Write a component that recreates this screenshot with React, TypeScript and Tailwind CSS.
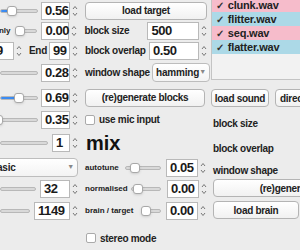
import React from 'react';

const font = { fontFamily: '"Liberation Sans", Arial, sans-serif' };

function Arrows () {
  return (
    <svg width="6" height="14" viewBox="0 0 6 14" className="shrink-0">
      <path d="M1 5 L3 2.5 L5 5" fill="none" stroke="#777" strokeWidth="1" />
      <path d="M1 9 L3 11.5 L5 9" fill="none" stroke="#777" strokeWidth="1" />
    </svg>
  );
}

function Spin ({ value, w }: { value: string; w: string }) {
  return (
    <div className={`flex h-[18px] shrink-0 items-center gap-[2px] ${w}`}>
      <div className="flex h-full min-w-0 flex-1 items-center whitespace-nowrap border border-[#b9b9b9] bg-white pl-[3px] text-[13px] font-bold tracking-[-0.4px] text-[#1a1a1a]">
        {value}
      </div>
      <Arrows />
    </div>
  );
}

function Slider ({ w, fill, handle }: { w: string; fill?: number; handle: number }) {
  return (
    <div className={`relative flex h-[18px] shrink-0 items-center ${w}`}>
      <div className="relative h-[4px] w-full overflow-hidden rounded-full border border-[#b8b8b8] bg-[#d9d9d9]">
        {fill ? <div className="h-full bg-[#3c8cf2]" style={{ width: fill }} /> : null}
      </div>
      <div
        className="absolute top-[4px] h-[10px] w-[10px] rounded-[3px] border border-[#a8a8a8] bg-white shadow-sm"
        style={{ left: handle }}
      />
    </div>
  );
}

function Button ({ label, w, className = '' }: { label: string; w: string; className?: string }) {
  return (
    <div
      className={`flex h-[18px] shrink-0 items-center justify-center whitespace-nowrap rounded-[4px] border border-[#b4b4b4] bg-gradient-to-b from-white to-[#f1f1f1] text-[10px] font-bold tracking-[-0.3px] text-[#222] ${w} ${className}`}
    >
      {label}
    </div>
  );
}

function Label ({ text, className = '' }: { text: string; className?: string }) {
  return (
    <span className={`shrink-0 whitespace-nowrap text-[10px] font-bold tracking-[-0.3px] text-[#222] ${className}`}>
      {text}
    </span>
  );
}

function Small ({ text, className = '' }: { text: string; className?: string }) {
  return (
    <span className={`shrink-0 whitespace-nowrap text-[8px] font-bold text-[#222] ${className}`}>
      {text}
    </span>
  );
}

function Check ({ label }: { label: string }) {
  return (
    <div className="flex items-center gap-[4px]">
      <div className="h-[10px] w-[10px] rounded-[2px] border border-[#aaa] bg-white" />
      <Label text={label} />
    </div>
  );
}

function Dropdown ({ value, w }: { value: string; w: string }) {
  return (
    <div
      className={`flex h-[19px] shrink-0 items-center justify-between whitespace-nowrap rounded-[4px] border border-[#bdbdbd] bg-gradient-to-b from-white to-[#f3f3f3] px-[3px] text-[10px] font-bold tracking-[-0.2px] text-[#222] ${w}`}
    >
      <span>{value}</span>
      <span className="text-[7px] text-[#888]">▼</span>
    </div>
  );
}

const files = [
  { name: 'clunk.wav', bg: 'bg-[#f6bccb]' },
  { name: 'flitter.wav', bg: 'bg-[#acd9e7]' },
  { name: 'seq.wav', bg: 'bg-[#f6bccb]' },
  { name: 'flatter.wav', bg: 'bg-[#acd9e7]' },
];

export default function App () {
  return (
    <div className="flex h-[250px] w-[300px] overflow-hidden bg-[#ececec] text-[#222]" style={font}>
      <div className="flex w-[210px] shrink-0 flex-col">
        <div className="mt-[1px] flex h-[19px] items-center">
          <Slider w="w-[38px]" fill={10} handle={7} />
          <Spin value="0.56" w="w-[37px] ml-[3px]" />
          <Button label="load target" w="w-[122px] ml-[7px]" />
        </div>
        <div className="mt-[1px] flex h-[19px] items-center">
          <Small text="only" className="-ml-[6px]" />
          <Slider w="w-[22px] ml-[5px]" handle={0} />
          <Spin value="0.00" w="w-[36px] ml-[4px]" />
          <Label text="block size" className="ml-[7px] w-[63px]" />
          <Spin value="500" w="w-[60px]" />
        </div>
        <div className="mt-[1px] flex h-[19px] items-center">
          <Spin value="9" w="w-[30px] -ml-[8px]" />
          <Label text="End" className="ml-[7px] w-[20px]" />
          <Spin value="99" w="w-[29px]" />
          <Label text="block overlap" className="ml-[7px] w-[64px]" />
          <Spin value="0.50" w="w-[58px]" />
        </div>
        <div className="mt-[3px] flex h-[19px] items-center">
          <Slider w="w-[38px]" handle={-20} />
          <Spin value="0.28" w="w-[37px] ml-[3px]" />
          <Label text="window shape" className="ml-[7px] w-[67px]" />
          <Dropdown value="hamming" w="w-[58px]" />
        </div>
        <div className="mt-[6px] flex h-[19px] items-center">
          <Slider w="w-[38px]" fill={16} handle={14} />
          <Spin value="0.69" w="w-[37px] ml-[3px]" />
          <Button label="(re)generate blocks" w="w-[120px] ml-[7px]" />
        </div>
        <div className="mt-[3px] flex h-[19px] items-center">
          <Slider w="w-[38px]" handle={-7} />
          <Spin value="0.35" w="w-[37px] ml-[3px]" />
          <div className="ml-[7px]">
            <Check label="use mic input" />
          </div>
        </div>
        <div className="mt-[4px] flex h-[20px] items-center">
          <Slider w="w-[48px]" handle={-30} />
          <Spin value="1" w="w-[26px] ml-[4px]" />
          <span className="ml-[8px] text-[20px] font-bold text-[#111]">mix</span>
        </div>
        <div className="mt-[5px] flex h-[19px] items-center">
          <Dropdown value="basic" w="w-[91px] -ml-[13px]" />
          <Small text="autotune" className="ml-[7px] w-[40px]" />
          <Slider w="w-[36px]" handle={5} />
          <Spin value="0.05" w="w-[40px] ml-[5px]" />
        </div>
        <div className="mt-[2px] flex h-[19px] items-center">
          <Slider w="w-[36px]" handle={-30} />
          <Spin value="32" w="w-[38px] ml-[4px]" />
          <Small text="normalised" className="ml-[7px] w-[46px]" />
          <Slider w="w-[30px]" handle={2} />
          <Spin value="0.00" w="w-[40px] ml-[6px]" />
        </div>
        <div className="mt-[3px] flex h-[19px] items-center">
          <Slider w="w-[30px]" handle={-30} />
          <Spin value="1149" w="w-[44px] ml-[4px]" />
          <Small text="brain / target" className="ml-[7px] w-[56px]" />
          <Slider w="w-[20px]" handle={0} />
          <Spin value="0.00" w="w-[40px] ml-[5px]" />
        </div>
        <div className="mt-[9px] ml-[86px] flex h-[18px] items-center">
          <Check label="stereo mode" />
        </div>
      </div>

      <div className="flex min-w-0 flex-1 flex-col pl-[1px]">
        <div className="-mt-[2px] h-[82px] shrink-0 border-l border-b border-[#c4c4c4] bg-[#f2f2f2]">
          {files.map(({ name, bg }) => (
            <div key={name} className={`flex h-[14px] items-center gap-[4px] whitespace-nowrap pl-[4px] text-[11px] font-bold tracking-[-0.2px] ${bg}`}>
              <span className="text-[10px] text-[#333]">✓</span>
              <span>{name}</span>
            </div>
          ))}
        </div>
        <div className="mt-[9px] flex gap-[6px]">
          <Button label="load sound" w="w-[58px]" />
          <Button label="directory" w="w-[60px]" className="justify-start pl-[4px]" />
        </div>
        <Label text="block size" className="mt-[9px] ml-[2px]" />
        <Label text="block overlap" className="mt-[10px] ml-[2px]" />
        <Label text="window shape" className="mt-[7px] ml-[2px]" />
        <Button label="(re)generate blocks" w="w-[180px] ml-[2px] mt-[1px]" />
        <Button label="load brain" w="w-[86px] ml-[2px] mt-[4px]" />
      </div>
    </div>
  );
}
